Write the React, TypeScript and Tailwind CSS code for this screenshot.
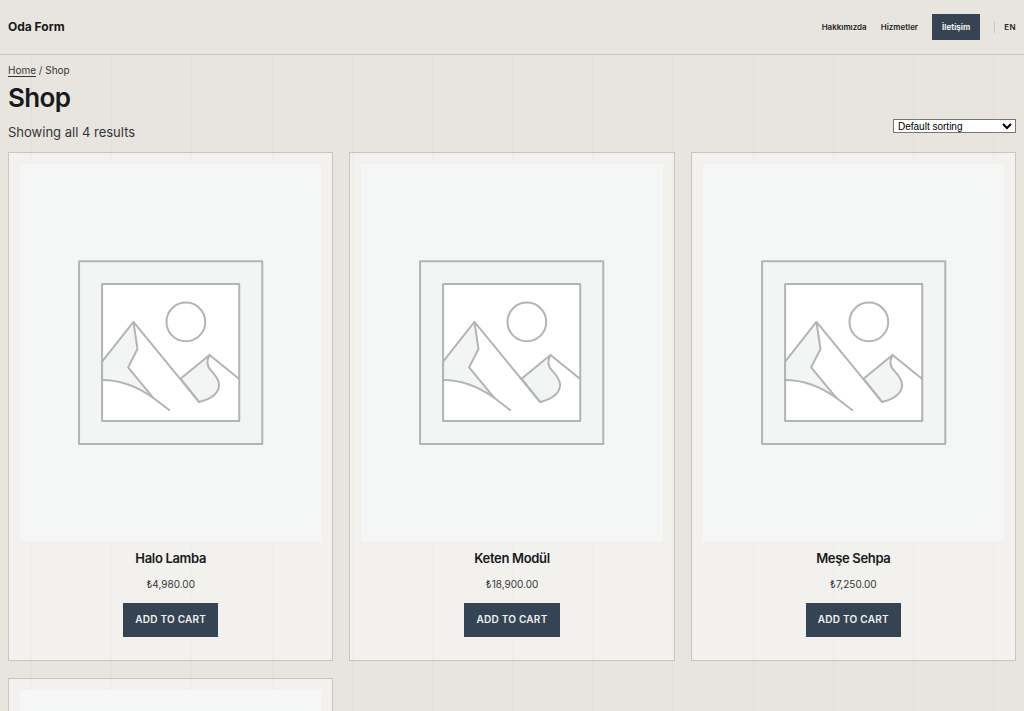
import React from "react";

interface Product {
  name: string;
  price: string;
}

const products: Product[] = [
  { name: "Halo Lamba", price: "₺4,980.00" },
  { name: "Keten Modül", price: "₺18,900.00" },
  { name: "Meşe Sehpa", price: "₺7,250.00" },
  { name: "Sedir Raf", price: "₺3,450.00" },
];

function Header() {
  return (
    <header className="flex items-center justify-between border-b border-[#c8c6c3] bg-[#e8e5de] px-2 py-[14px]">
      <a href="#" className="text-xs font-bold text-[#16191d]">
        Oda Form
      </a>
      <nav className="flex items-center gap-[14px] text-[8px] font-semibold text-[#1b1e22]">
        <a href="#">Hakkımızda</a>
        <a href="#">Hizmetler</a>
        <a
          href="#"
          className="flex h-[26px] items-center bg-[#344454] px-[10px] font-bold text-[#f2f0ec]"
        >
          İletişim
        </a>
        <a href="#" className="border-l border-[#c8c6c3] pl-[9px] tracking-wider">
          EN
        </a>
      </nav>
    </header>
  );
}

function Placeholder() {
  return (
    <svg
      viewBox="-150 -258 903 1128"
      className="block aspect-[4/5] w-full bg-[#f5f7f6]"
      fill="none"
      stroke="#b1b5b4"
      strokeWidth="6"
      strokeLinejoin="round"
      strokeLinecap="round"
      aria-hidden="true"
    >
      <rect x="27" y="33" width="549" height="548" fill="#f3f5f4" />
      <rect x="96" y="101" width="411" height="411" fill="#ffffff" />
      <circle cx="347" cy="215" r="58" />
      <path
        d="M96 334 190 215 202 296 174 351 250 443C204 410 150 389 96 389Z"
        fill="#f3f5f4"
        stroke="none"
      />
      <path
        d="M331 385 418 314C407 334 411 349 423 361C448 388 452 406 440 425C430 440 411 449 387 455Z"
        fill="#f3f5f4"
      />
      <path d="M96 334 190 215 387 455" />
      <path d="M190 215 202 296 174 351 250 443" />
      <path d="M96 389C150 389 204 410 250 443L297 479" />
      <path d="M418 314 507 386" />
      <path d="M96 330V393" />
    </svg>
  );
}

function ProductCard({ product }: { product: Product }) {
  return (
    <li className="flex flex-col items-center border border-[#c8c6c3] bg-white/45 px-[11px] pt-[11px] pb-[23px]">
      <Placeholder />
      <h2 className="mt-[7px] text-[13px] leading-5 font-semibold tracking-tight text-[#16191d]">
        {product.name}
      </h2>
      <span className="mt-2 text-[10px] leading-4 text-[#33363a]">
        {product.price}
      </span>
      <button
        type="button"
        className="mt-[11px] h-[34px] bg-[#344454] px-3 text-[10px] font-semibold tracking-wide text-[#f2f0ec] uppercase"
      >
        Add to cart
      </button>
    </li>
  );
}

export default function App() {
  return (
    <div className="min-h-screen bg-[#e8e5de] bg-[repeating-linear-gradient(90deg,#e2dfd8_0,#e2dfd8_1px,transparent_1px,transparent_7.83%)] bg-[position:31px_0] font-['Inter','Liberation_Sans',sans-serif]">
      <Header />
      <main className="px-2 pt-[7px] pb-4">
        <nav
          aria-label="Breadcrumb"
          className="text-[10px] leading-4 text-[#33363a]"
        >
          <a href="#" className="underline underline-offset-2">
            Home
          </a>{" "}
          / Shop
        </nav>
        <h1 className="mt-1 text-[26px] leading-8 font-semibold tracking-tight text-[#16191d]">
          Shop
        </h1>
        <div className="flex items-start justify-between pt-[5px]">
          <p className="pt-[3px] pb-[10px] text-[13px] leading-5 text-[#33363a]">
            Showing all 4 results
          </p>
          <select
            aria-label="Shop order"
            className="h-[14px] w-[123px] border border-[#767676] bg-white font-['Liberation_Sans',sans-serif] text-[10px] text-black"
          >
            <option>Default sorting</option>
            <option>Sort by popularity</option>
            <option>Sort by latest</option>
          </select>
        </div>
        <ul className="grid grid-cols-3 gap-x-4 gap-y-[17px]">
          {products.map((product) => (
            <ProductCard key={product.name} product={product} />
          ))}
        </ul>
      </main>
    </div>
  );
}
